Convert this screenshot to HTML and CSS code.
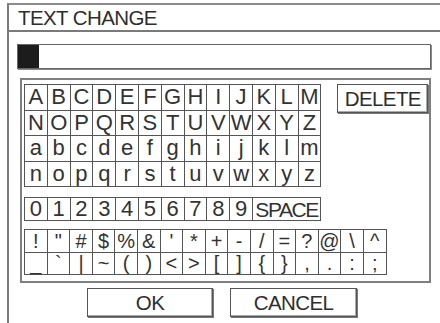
FILE: index.html
```html
<!DOCTYPE html>
<html>
<head>
<meta charset="utf-8">
<link rel="stylesheet" href="styles.css">
</head>
<body>
<div class="dialog">
  <div class="title">TEXT CHANGE</div>
  <div class="input"><span class="cursor"></span></div>
  <div class="group">
    <div class="top-row">
      <div class="grid letters">
        <span>A</span><span>B</span><span>C</span><span>D</span><span>E</span><span>F</span><span>G</span><span>H</span><span>I</span><span>J</span><span>K</span><span>L</span><span>M</span>
        <span>N</span><span>O</span><span>P</span><span>Q</span><span>R</span><span>S</span><span>T</span><span>U</span><span>V</span><span>W</span><span>X</span><span>Y</span><span>Z</span>
        <span>a</span><span>b</span><span>c</span><span>d</span><span>e</span><span>f</span><span>g</span><span>h</span><span>i</span><span>j</span><span>k</span><span>l</span><span>m</span>
        <span>n</span><span>o</span><span>p</span><span>q</span><span>r</span><span>s</span><span>t</span><span>u</span><span>v</span><span>w</span><span>x</span><span>y</span><span>z</span>
      </div>
      <div class="btn delete">DELETE</div>
    </div>
    <div class="grid digits">
      <span>0</span><span>1</span><span>2</span><span>3</span><span>4</span><span>5</span><span>6</span><span>7</span><span>8</span><span>9</span><span class="space">SPACE</span>
    </div>
    <div class="grid symbols">
      <span>!</span><span>"</span><span>#</span><span>$</span><span>%</span><span>&amp;</span><span>'</span><span>*</span><span>+</span><span>-</span><span>/</span><span>=</span><span>?</span><span>@</span><span>\</span><span>^</span>
      <span>_</span><span>`</span><span>|</span><span>~</span><span>(</span><span>)</span><span>&lt;</span><span>&gt;</span><span>[</span><span>]</span><span>{</span><span>}</span><span>,</span><span>.</span><span>:</span><span>;</span>
    </div>
  </div>
  <div class="buttons">
    <div class="btn ok">OK</div>
    <div class="btn cancel">CANCEL</div>
  </div>
</div>
</body>
</html>
```

FILE: styles.css
```css
html, body {
  margin: 0;
  padding: 0;
  background: #fff;
}
body {
  width: 440px;
  height: 323px;
  overflow: hidden;
  font-family: "Liberation Sans", Arial, sans-serif;
  color: #333;
}
.dialog {
  margin: 3px 0 0 7px;
  width: 433px;
  height: 320px;
  overflow: hidden;
  border-left: 2px solid #7a7a7a;
  border-top: 2px solid #8a8a8a;
  box-sizing: border-box;
}
.title {
  height: 27px;
  box-sizing: border-box;
  border-bottom: 2px solid #7a7a7a;
  padding-left: 9px;
  font-size: 20.5px;
  line-height: 26px;
  letter-spacing: -0.6px;
  color: #2e2e2e;
}
.input {
  margin: 12px 0 0 8px;
  width: 414px;
  height: 25px;
  box-sizing: border-box;
  border: 1px solid #666;
  box-shadow: 1px 1px 0 #888;
  display: flex;
}
.cursor {
  width: 21px;
  height: 23px;
  background: #1c1c1c;
}
.group {
  margin: 9px 0 0 11px;
  width: 411px;
  box-sizing: border-box;
  border: 2px solid #808080;
  padding: 4px 0 6px 2px;
}
.top-row {
  display: flex;
  align-items: flex-start;
  gap: 16px;
}
.grid {
  display: grid;
  gap: 1px;
  background: #555;
  border: 1px solid #555;
  width: max-content;
}
.grid span {
  background: #fff;
  display: flex;
  align-items: center;
  justify-content: center;
  font-size: 22px;
  line-height: 1;
  color: #333;
}
.letters {
  grid-template-columns: repeat(13, 21.8px);
  grid-template-rows: repeat(4, 24.5px);
}
.digits {
  margin-top: 10px;
  grid-template-columns: repeat(13, 21.8px);
  grid-template-rows: 22px;
}
.digits .space {
  grid-column: span 3;
  font-size: 21px;
  letter-spacing: -1.4px;
}
.symbols {
  margin-top: 8px;
  grid-template-columns: repeat(16, 21.6px);
  grid-template-rows: repeat(2, 21.5px);
}
.symbols span {
  font-size: 20px;
}
.btn {
  box-sizing: border-box;
  border: 1px solid #555;
  box-shadow: 1px 1px 0 #777, inset -1px -1px 0 #aaa;
  display: flex;
  align-items: center;
  justify-content: center;
  font-size: 20.5px;
  letter-spacing: -0.6px;
  color: #2e2e2e;
}
.delete {
  width: 91px;
  height: 29px;
}
.buttons {
  display: flex;
  gap: 17px;
  margin: 5px 0 0 78px;
}
.ok {
  width: 126px;
  height: 29px;
}
.cancel {
  width: 127px;
  height: 29px;
}
```
